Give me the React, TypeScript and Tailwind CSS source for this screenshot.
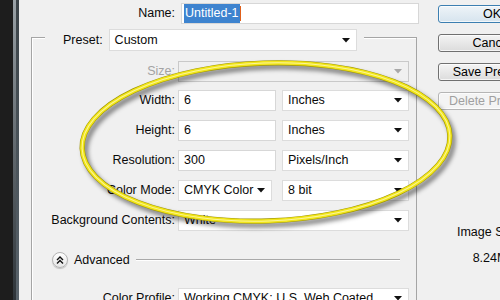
import type { ReactNode } from 'react';

const font = { fontFamily: '"Liberation Sans", Arial, sans-serif' };

function Arrow({ disabled = false }: { disabled?: boolean }) {
    return (
        <svg width="8" height="5" viewBox="0 0 8 5" className="shrink-0">
            <polygon points="0,0 8,0 4,4.5" fill={disabled ? '#a8a8a8' : '#111111'} />
        </svg>
    );
}

function Select({ value, width, disabled = false }: { value: string; width: string; disabled?: boolean }) {
    return (
        <div
            className={`flex h-[21px] items-center justify-between gap-[2px] overflow-hidden border pr-[6px] pl-[5px] ${width} ${
                disabled ? 'border-[#c9c9c9] bg-[#f0f0f0]' : 'border-[#dcdcdc] bg-white'
            }`}
        >
            <span className="whitespace-nowrap">{value}</span>
            <Arrow disabled={disabled} />
        </div>
    );
}

function Input({ value, width }: { value: string; width: string }) {
    return <div className={`flex h-[21px] items-center border border-[#d7d7d7] bg-white pl-[5px] ${width}`}>{value}</div>;
}

function Row({ label, children, muted = false, mt }: { label: string; children: ReactNode; muted?: boolean; mt: string }) {
    return (
        <div className={`flex items-center ${mt}`}>
            <span className={`w-[143px] text-right whitespace-nowrap ${muted ? 'text-[#a3a3a3]' : ''}`}>{label}</span>
            <div className="ml-[3px] flex items-center">{children}</div>
        </div>
    );
}

function Button({ label, primary = false, disabled = false }: { label: string; primary?: boolean; disabled?: boolean }) {
    let tone = 'border-[#707070] bg-gradient-to-b from-[#f4f4f4] to-[#dcdcdc] text-black';
    if (primary) tone = 'border-[#3c7fb1] bg-gradient-to-b from-[#eef4f8] to-[#d6e4ee] text-black';
    if (disabled) tone = 'border-[#b5b5b5] bg-[#f4f4f4] text-[#a0a0a0]';

    return (
        <div className={`flex h-[18px] w-[108px] items-center justify-center rounded-[3px] border whitespace-nowrap shadow-[inset_0_0_0_1px_rgba(255,255,255,0.7)] ${tone}`}>
            {label}
        </div>
    );
}

export default function App() {
    return (
        <div className="relative flex h-[300px] w-[500px] overflow-hidden bg-[#f0f0f0] text-[12.5px] text-[#0a0a0a]" style={font}>
            {/* window edge */}
            <div className="flex w-[19px] shrink-0">
                <div className="w-[13px] bg-[#1d1d1d]" />
                <div className="w-[3px] bg-gradient-to-b from-[#9aa2a7] to-[#2e3439]" />
                <div className="w-[3px] bg-gradient-to-b from-[#3b4348] to-[#59636b]" />
            </div>

            <div className="w-[418px] shrink-0">
                <div className="mt-[3px] flex h-[21px] items-center">
                    <span className="w-[156px] text-right">Name:</span>
                    <div className="ml-[6px] flex h-[21px] w-[238px] items-center border border-[#d7d7d7] bg-white pl-[2px]">
                        <span className="bg-[#3d83cf] px-[1px] text-white">Untitled-1</span>
                        <span className="h-[15px] w-[1px] bg-[#e0601a]" />
                    </div>
                </div>

                <div className="mt-[13px] ml-[12px] h-[300px] w-[386px] border-t border-r border-l border-[#a5a5a5] shadow-[inset_1px_1px_0_#ffffff]">
                    <div className="-mt-[9px] ml-[13px] flex w-fit items-center bg-[#f0f0f0] pr-[7px] pl-[18px]">
                        <span>Preset:</span>
                        <div className="ml-[6px] flex h-[22px] w-[248px] items-center justify-between border border-[#dcdcdc] bg-white pr-[6px] pl-[5px]">
                            <span>Custom</span>
                            <Arrow />
                        </div>
                    </div>

                    <Row label="Size:" muted mt="mt-[10px]">
                        <Select value="" width="w-[231px]" disabled />
                    </Row>
                    <Row label="Width:" mt="mt-[8px]">
                        <Input value="6" width="w-[98px]" />
                        <div className="ml-[6px]">
                            <Select value="Inches" width="w-[127px]" />
                        </div>
                    </Row>
                    <Row label="Height:" mt="mt-[9px]">
                        <Input value="6" width="w-[98px]" />
                        <div className="ml-[6px]">
                            <Select value="Inches" width="w-[127px]" />
                        </div>
                    </Row>
                    <Row label="Resolution:" mt="mt-[9px]">
                        <Input value="300" width="w-[98px]" />
                        <div className="ml-[6px]">
                            <Select value="Pixels/Inch" width="w-[127px]" />
                        </div>
                    </Row>
                    <Row label="Color Mode:" mt="mt-[9px]">
                        <Select value="CMYK Color" width="w-[94px]" />
                        <div className="ml-[10px]">
                            <Select value="8 bit" width="w-[127px]" />
                        </div>
                    </Row>
                    <Row label="Background Contents:" mt="mt-[9px]">
                        <Select value="White" width="w-[231px]" />
                    </Row>

                    <div className="mt-[21px] ml-[20px] mr-[16px] flex h-[16px] items-center">
                        <div className="flex h-[16px] w-[16px] items-center justify-center rounded-full border border-[#b4b4b4] bg-gradient-to-b from-white to-[#e6e6e6] shadow-[0_1px_1px_rgba(0,0,0,0.2)]">
                            <svg width="8" height="8" viewBox="0 0 8 8">
                                <polyline points="1,4 4,1 7,4" fill="none" stroke="#111" strokeWidth="1.4" />
                                <polyline points="1,7.5 4,4.5 7,7.5" fill="none" stroke="#111" strokeWidth="1.4" />
                            </svg>
                        </div>
                        <span className="ml-[6px]">Advanced</span>
                        <div className="ml-[6px] h-[2px] flex-1 border-t border-b border-t-[#a9a9a9] border-b-white" />
                    </div>

                    <Row label="Color Profile:" mt="mt-[20px]">
                        <Select value="Working CMYK: U.S. Web Coated" width="w-[231px]" />
                    </Row>
                </div>
            </div>

            <div className="ml-[1px] flex shrink-0 flex-col">
                <div className="mt-[5px] flex flex-col gap-[11px]">
                    <Button label="OK" primary />
                    <Button label="Cancel" />
                    <Button label="Save Preset..." />
                    <Button label="Delete Preset..." disabled />
                </div>
                <div className="mt-[113px] flex w-[104px] flex-col items-center gap-[7px]">
                    <span>Image Size:</span>
                    <span>8.24M</span>
                </div>
            </div>

            {/* annotation */}
            <svg className="pointer-events-none absolute inset-0" width="500" height="300" viewBox="0 0 500 300">
                <defs>
                    <filter id="blur" x="-10%" y="-10%" width="120%" height="120%">
                        <feGaussianBlur stdDeviation="2.2" />
                    </filter>
                </defs>
                <g transform="rotate(-2 266 142)">
                    <ellipse cx="269" cy="146" rx="184" ry="79" fill="none" stroke="rgba(0,0,0,0.45)" strokeWidth="5.5" filter="url(#blur)" />
                    <ellipse cx="266" cy="142" rx="184" ry="79" fill="none" stroke="#a09600" strokeWidth="5.2" />
                    <ellipse cx="266" cy="142" rx="184" ry="79" fill="none" stroke="#f2e61a" strokeWidth="4" />
                    <ellipse cx="266" cy="142" rx="184" ry="79" fill="none" stroke="#fbf59a" strokeWidth="1" />
                </g>
            </svg>
        </div>
    );
}
